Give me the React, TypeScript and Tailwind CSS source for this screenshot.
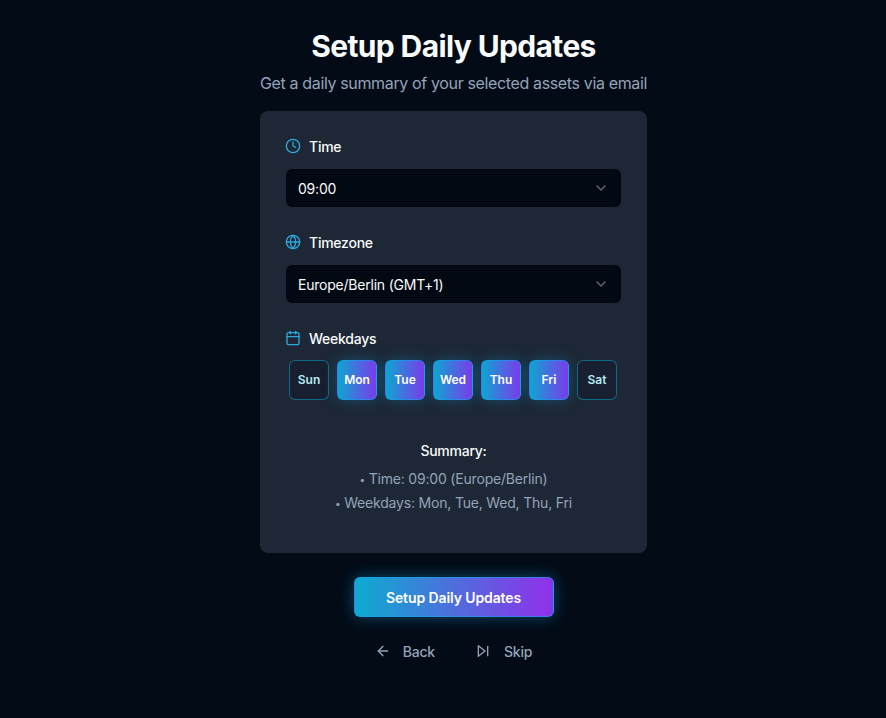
import { Clock, Globe, Calendar, ChevronDown, ArrowLeft } from "lucide-react";

const days = [
  ["Sun", false],
  ["Mon", true],
  ["Tue", true],
  ["Wed", true],
  ["Thu", true],
  ["Fri", true],
  ["Sat", false],
] as const;

function Label({ icon, text }: { icon: React.ReactNode; text: string }) {
  return (
    <div className="flex items-center gap-[8px] h-5 text-sm font-medium tracking-[-0.25px] text-[#f8fafc]">
      <span className="-mt-[2px] -ml-[1px]">{icon}</span>
      <span>{text}</span>
    </div>
  );
}

function Select({ value }: { value: string }) {
  return (
    <div className="mt-[12px] flex h-[38px] items-center justify-between rounded-md bg-[#020913] px-3 text-sm tracking-[-0.22px] text-[#f8fafc]">
      <span className="translate-y-[1px]">{value}</span>
      <ChevronDown className="h-4 w-4 text-[#f8fafc] opacity-40" />
    </div>
  );
}

function SkipIcon() {
  return (
    <svg
      width="16"
      height="16"
      viewBox="0 0 24 24"
      fill="none"
      stroke="currentColor"
      strokeWidth="2"
      strokeLinecap="round"
      strokeLinejoin="round"
      className="-translate-y-[1px]"
    >
      <polygon points="5 4 15 12 5 20 5 4" />
      <line x1="19" y1="5" x2="19" y2="19" />
    </svg>
  );
}

function Bullet() {
  return <span className="inline-block -translate-y-[1px] text-[10px] leading-none">•</span>;
}

export default function App() {
  const iconCls = "block h-4 w-4 text-[#2fa8dc]";
  return (
    <div
      className="flex min-h-[718px] flex-col items-center bg-[#030b17] pt-7 pl-[21px]"
      style={{ fontFamily: "Inter, sans-serif" }}
    >
      <h1 className="text-[30px] leading-9 font-bold tracking-[-0.63px] text-[#f8fafc]">Setup Daily Updates</h1>
      <p className="mt-[7px] text-base leading-6 tracking-[-0.36px] text-[#94a3b8]">Get a daily summary of your selected assets via email</p>
      <div className="mt-4 flex h-[442px] w-[387px] flex-col rounded-lg bg-[#1d2735] px-[26px] pt-[26px]">
        <Label icon={<Clock className={iconCls} />} text="Time" />
        <Select value="09:00" />
        <div className="mt-[26px]">
          <Label icon={<Globe className={iconCls} />} text="Timezone" />
          <Select value="Europe/Berlin (GMT+1)" />
        </div>
        <div className="mt-[26px]">
          <Label icon={<Calendar className={iconCls} />} text="Weekdays" />
          <div className="mt-[11px] flex gap-2 pl-[3px]">
            {days.map(([d, on]) => (
              <div
                key={d}
                className={
                  on
                    ? "flex h-10 w-10 items-center justify-center rounded-md border border-[#0ea5e9]/60 bg-linear-to-r/srgb from-[#0ea5d0] to-[#7c3aed] text-xs font-semibold text-white shadow-[0_0_15px_rgba(14,165,233,0.3)]"
                    : "flex h-10 w-10 items-center justify-center rounded-md border border-[#06b6d4]/50 bg-[#171f31] text-xs font-semibold text-[#b5e9ef]"
                }
              >
                {d}
              </div>
            ))}
          </div>
        </div>
        <div className="mt-[41px] flex flex-col items-center tracking-[-0.19px]">
          <div className="text-sm leading-5 font-medium tracking-[-0.25px] text-[#f8fafc]">Summary:</div>
          <div className="mt-[6px] h-6 text-sm leading-6 text-[#94a3b8]">
            <Bullet /> Time: 09:00 (Europe/Berlin)
          </div>
          <div className="h-6 text-sm leading-6 text-[#94a3b8]">
            <Bullet /> Weekdays: Mon, Tue, Wed, Thu, Fri
          </div>
        </div>
      </div>
      <button className="mt-6 flex h-10 w-[200px] items-center justify-center rounded-md border border-[#0ea5e9]/60 bg-linear-to-r/srgb from-[#0cacd0] to-[#9030ea] text-sm font-semibold tracking-[-0.1px] text-white shadow-[0_0_15px_rgba(14,165,233,0.4)]">
        <span className="translate-y-[1px]">Setup Daily Updates</span>
      </button>
      <div className="mt-[21px] flex items-center gap-4 text-sm font-medium tracking-[-0.2px] text-[#94a3b8]">
        <div className="flex items-center gap-3 px-3 py-1">
          <ArrowLeft className="h-4 w-4 -translate-y-[1px]" />
          <span>Back</span>
        </div>
        <div className="flex items-center gap-[13px] px-3 py-1">
          <SkipIcon />
          <span>Skip</span>
        </div>
      </div>
    </div>
  );
}
